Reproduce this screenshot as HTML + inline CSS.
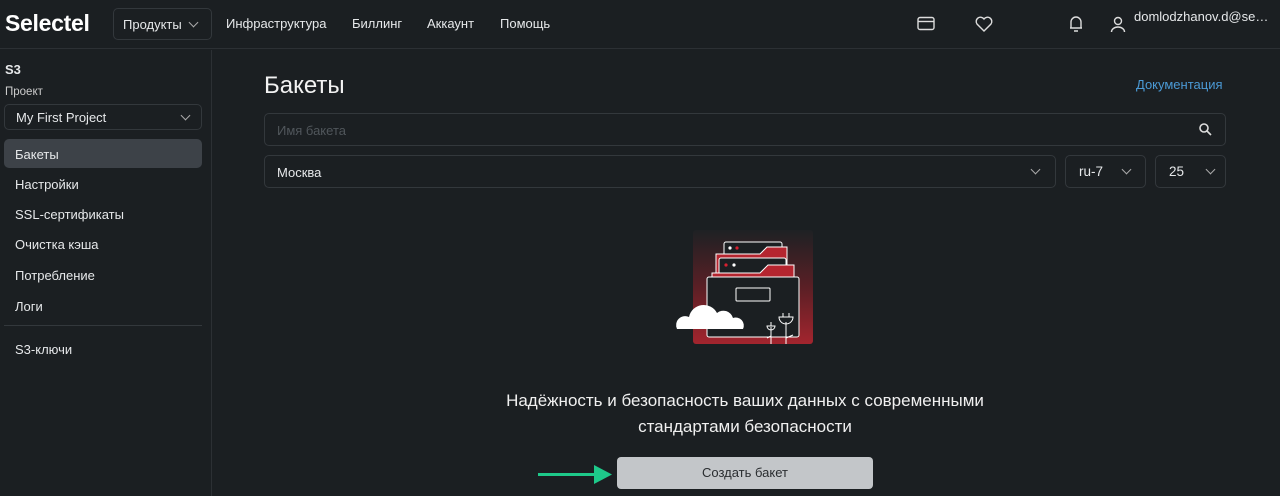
<!DOCTYPE html>
<html><head><meta charset="utf-8"><style>
*{box-sizing:border-box;margin:0;padding:0}
body{width:1280px;height:496px;overflow:hidden;background:#1b1f22;font-family:"Liberation Sans",sans-serif;color:#e6e8ea;position:relative}
.top{position:absolute;left:0;top:0;width:1280px;height:49px;border-bottom:1px solid #2c3034}
.logo{position:absolute;left:5px;top:10px;font-size:23px;font-weight:bold;color:#fff;letter-spacing:-0.3px}
.prod{position:absolute;left:113px;top:8px;width:99px;height:32px;border:1px solid #33383c;border-radius:5px;font-size:13px;padding:8px 0 0 9px}
.nav{position:absolute;top:16px;font-size:13px}
.side{position:absolute;left:0;top:50px;width:212px;height:446px;border-right:1px solid #2c3034}
.abs{position:absolute}
.sel{border:1px solid #33383c;border-radius:5px}
.item{position:absolute;left:15px;font-size:13px}
.chev{position:absolute;width:7px;height:7px;border-right:1.3px solid #aaa;border-bottom:1.3px solid #aaa;transform:rotate(45deg)}
</style></head><body>
<div class="top">
<div class="logo">Selectel</div>
<div class="prod">Продукты</div><div class="chev" style="left:190px;top:19px"></div>
<div class="nav" style="left:226px">Инфраструктура</div>
<div class="nav" style="left:352px">Биллинг</div>
<div class="nav" style="left:427px">Аккаунт</div>
<div class="nav" style="left:500px">Помощь</div>
<svg class="abs" style="left:916px;top:14px" width="20" height="20" viewBox="0 0 20 20" fill="none" stroke="#ddd" stroke-width="1.4"><rect x="2" y="3.5" width="16" height="12" rx="2"/><path d="M2 7.5h16"/></svg>
<svg class="abs" style="left:974px;top:14px" width="20" height="20" viewBox="0 0 20 20" fill="none" stroke="#ddd" stroke-width="1.4"><path d="M10 17 3 10a4 4 0 0 1 7-5 4 4 0 0 1 7 5z"/></svg>
<svg class="abs" style="left:1066px;top:13px" width="20" height="20" viewBox="0 0 20 20" fill="none" stroke="#ddd" stroke-width="1.4"><path d="M5 15V9a5 5 0 0 1 10 0v6H4h12M8 18h4"/></svg>
<svg class="abs" style="left:1108px;top:14px" width="20" height="20" viewBox="0 0 20 20" fill="none" stroke="#ddd" stroke-width="1.4"><circle cx="10" cy="7" r="3.5"/><path d="M3.5 18a6.5 5 0 0 1 13 0"/></svg>
<div class="nav" style="left:1134px;top:9px;font-size:13px">domlodzhanov.d@se…</div>
</div>
<div class="side">
<div class="abs" style="left:5px;top:12px;font-size:13px;font-weight:bold">S3</div>
<div class="abs" style="left:5px;top:36px;font-size:11.5px;color:#ccc">Проект</div>
<div class="abs sel" style="left:4px;top:54px;width:198px;height:26px;font-size:13px;padding:5px 0 0 11px">My First Project</div>
<div class="chev" style="left:182px;top:62px"></div>
<div class="abs" style="left:4px;top:89px;width:198px;height:29px;background:#3d4248;border-radius:5px"></div>
<div class="item" style="top:97px">Бакеты</div>
<div class="item" style="top:127px">Настройки</div>
<div class="item" style="top:157px">SSL-сертификаты</div>
<div class="item" style="top:187px">Очистка кэша</div>
<div class="item" style="top:218px">Потребление</div>
<div class="item" style="top:249px">Логи</div>
<div class="abs" style="left:4px;top:275px;width:198px;height:1px;background:#33383c"></div>
<div class="item" style="top:292px">S3-ключи</div>
</div>
<div class="abs" style="left:264px;top:72px;font-size:24px;color:#f2f2f2">Бакеты</div>
<div class="abs" style="left:1136px;top:77px;font-size:13px;color:#4b9ad6">Документация</div>
<div class="abs sel" style="left:264px;top:113px;width:962px;height:33px;font-size:13px;color:#50565b;padding:9px 0 0 12px">Имя бакета</div>
<svg class="abs" style="left:1198px;top:122px" width="15" height="15" viewBox="0 0 15 15" fill="none" stroke="#ddd" stroke-width="1.6"><circle cx="6" cy="6" r="4"/><path d="M9 9l4 4"/></svg>
<div class="abs sel" style="left:264px;top:155px;width:792px;height:33px;font-size:13px;padding:9px 0 0 12px">Москва</div>
<div class="chev" style="left:1032px;top:166px"></div>
<div class="abs sel" style="left:1065px;top:155px;width:81px;height:33px;font-size:13.5px;padding:8px 0 0 13px">ru-7</div>
<div class="chev" style="left:1123px;top:166px"></div>
<div class="abs sel" style="left:1155px;top:155px;width:71px;height:33px;font-size:13.5px;padding:8px 0 0 13px">25</div>
<div class="chev" style="left:1207px;top:166px"></div>
<svg class="abs" style="left:660px;top:220px" width="180" height="140" viewBox="660 220 180 140">
<defs><linearGradient id="g" x1="0" y1="0" x2="0" y2="1"><stop offset="0" stop-color="#1e2124"/><stop offset="0.5" stop-color="#5a1f25"/><stop offset="1" stop-color="#a3252e"/></linearGradient></defs>
<rect x="693" y="230" width="120" height="114" rx="3" fill="url(#g)"/>
<rect x="724" y="242" width="58" height="24" rx="2" fill="#1b1f22" stroke="#fff" stroke-width="1"/>
<circle cx="730" cy="248" r="1.6" fill="#fff"/><circle cx="737" cy="248" r="1.6" fill="#d82030"/>
<path d="M716 285V254h44l7-7h20v38z" fill="#b5252f" stroke="#fff" stroke-width="1"/>
<rect x="719" y="258" width="67" height="24" rx="2" fill="#1b1f22" stroke="#fff" stroke-width="1"/>
<circle cx="726" cy="265" r="1.6" fill="#d82030"/><circle cx="734" cy="265" r="1.6" fill="#fff"/>
<path d="M712 290V273h48l8-8h26v25z" fill="#b5252f" stroke="#fff" stroke-width="1"/>
<rect x="707" y="277" width="92" height="60" rx="2" fill="#1b1f22" stroke="#fff" stroke-width="1"/>
<rect x="736" y="288" width="34" height="13" rx="1" fill="none" stroke="#fff" stroke-width="1"/>
<path d="M677 329a9 9 0 0 1 12-12 15 15 0 0 1 28-4 10 10 0 0 1 16 5 8 8 0 0 1 10 11z" fill="#fff"/>
<g stroke="#fff" stroke-width="1" fill="none"><path d="M771 344v-17M767 326a4 4 0 0 0 8 0zM771 322v4M767 338l4-2M786 344v-22M779 317a7 7 0 0 0 14 0zM783 313v4M789 313v4M786 338l7-3"/></g>
</svg>
<div class="abs" style="left:485px;top:388px;width:520px;text-align:center;font-size:17px;line-height:26px;color:#f0f0f0">Надёжность и безопасность ваших данных с современными стандартами безопасности</div>
<div class="abs" style="left:617px;top:457px;width:256px;height:32px;background:#c3c6c9;border-radius:4px;color:#2a2d30;font-size:13px;text-align:center;padding-top:8px">Создать бакет</div>
<div class="abs" style="left:538px;top:473px;width:60px;height:3px;background:#1ec98a"></div>
<svg class="abs" style="left:594px;top:465px" width="18" height="19"><path d="M0 0L18 9.5 0 19z" fill="#1ec98a"/></svg>
</body></html>
